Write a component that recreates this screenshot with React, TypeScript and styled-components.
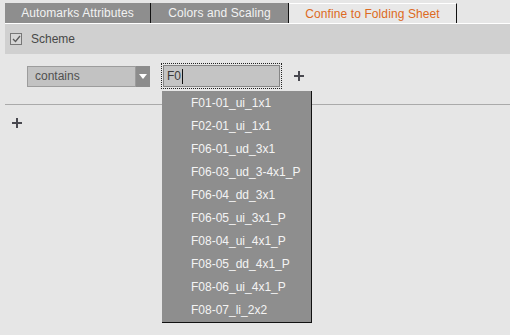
import styled, { createGlobalStyle } from "styled-components";

const GlobalStyle = createGlobalStyle`
  html, body {
    margin: 0;
    padding: 0;
    background: #e6e6e6;
  }
  body {
    font-family: "Liberation Sans", Arial, sans-serif;
    font-size: 12px;
  }
`;

const Page = styled.div`
  position: relative;
  width: 510px;
  height: 335px;
  padding: 3px 0 0 5px;
  box-sizing: border-box;
  overflow: hidden;
`;

const TabStrip = styled.div`
  display: flex;
  height: 20px;
  border-bottom: 1px solid #ffffff;
`;

const Tab = styled.div<{ $active?: boolean; $w: number }>`
  display: flex;
  align-items: center;
  justify-content: center;
  width: ${({ $w }) => $w}px;
  height: 20px;
  box-sizing: border-box;
  background: ${({ $active }) => ($active ? "#e8e8e8" : "#8e8e8e")};
  color: ${({ $active }) => ($active ? "#dd6a22" : "#f2f2f2")};
  border-right: 1px solid #111111;
  border-top: ${({ $active }) => ($active ? "1px solid #ffffff" : "none")};
  letter-spacing: 0.1px;
  white-space: nowrap;
`;

const SchemeBar = styled.div`
  display: flex;
  align-items: center;
  height: 30px;
  padding-left: 5px;
  background: #d0d0d0;
  color: #484848;
`;

const CheckBox = styled.span`
  display: inline-flex;
  align-items: center;
  justify-content: center;
  width: 12px;
  height: 12px;
  box-sizing: border-box;
  border: 1px solid #777777;
  background: #d6d6d6;
  margin-right: 9px;
`;

const FilterRow = styled.div`
  display: flex;
  align-items: center;
  padding: 9px 0 0 22px;
  height: 26px;
`;

const Combo = styled.div`
  display: flex;
  width: 123px;
  height: 21px;
`;

const ComboValue = styled.div`
  flex: 1;
  display: flex;
  align-items: center;
  padding-left: 7px;
  border: 1px solid #9c9c9c;
  background: #c2c2c2;
  color: #505050;
`;

const ComboArrow = styled.div`
  display: flex;
  align-items: center;
  justify-content: center;
  width: 14px;
  background: #8c8c8c;
`;

const FieldWrap = styled.div`
  position: relative;
  margin-left: 11px;
  width: 121px;
  height: 26px;
  box-sizing: border-box;
  border: 1px dotted #222222;
  padding: 1px;
`;

const FieldBox = styled.div`
  display: flex;
  align-items: center;
  height: 100%;
  box-sizing: border-box;
  border: 1px solid #858585;
  background: #c4c4c4;
  padding-left: 3px;
  color: #3a3a3a;
`;

const Caret = styled.span`
  display: inline-block;
  width: 1px;
  height: 15px;
  margin-left: 1px;
  background: #111111;
`;

const AddButton = styled.span<{ $ml: number }>`
  display: inline-flex;
  margin-left: ${({ $ml }) => $ml}px;
`;

const Divider = styled.div`
  margin-top: 15px;
  height: 1px;
  background: #aaaaaa;
`;

const BottomAdd = styled.div`
  padding: 13px 0 0 7px;
  display: flex;
`;

const Suggestions = styled.ul`
  position: absolute;
  top: calc(100% + 3px);
  left: 0;
  width: 149px;
  margin: 0;
  padding: 1px 0 0;
  list-style: none;
  background: #8e8e8e;
  border-right: 1px solid #111111;
  border-bottom: 1px solid #111111;
  z-index: 5;
`;

const Suggestion = styled.li`
  height: 23px;
  line-height: 23px;
  padding-left: 29px;
  color: #f4f4f4;
  white-space: nowrap;
`;

const schemes = [
  "F01-01_ui_1x1",
  "F02-01_ui_1x1",
  "F06-01_ud_3x1",
  "F06-03_ud_3-4x1_P",
  "F06-04_dd_3x1",
  "F06-05_ui_3x1_P",
  "F08-04_ui_4x1_P",
  "F08-05_dd_4x1_P",
  "F08-06_ui_4x1_P",
  "F08-07_li_2x2",
];

function PlusIcon() {
  return (
    <svg width="10" height="10" viewBox="0 0 10 10">
      <rect x="0" y="4" width="10" height="2" fill="#48484f" />
      <rect x="4" y="0" width="2" height="10" fill="#48484f" />
    </svg>
  );
}

export default function App() {
  return (
    <>
      <GlobalStyle />
      <Page>
        <TabStrip>
          <Tab $w={146}>Automarks Attributes</Tab>
          <Tab $w={138}>Colors and Scaling</Tab>
          <Tab $w={168} $active>
            Confine to Folding Sheet
          </Tab>
        </TabStrip>
        <SchemeBar>
          <CheckBox>
            <svg width="9" height="8" viewBox="0 0 9 8">
              <path d="M1 4 L3.5 6.5 L8 1" fill="none" stroke="#5a5a5a" strokeWidth="1.3" />
            </svg>
          </CheckBox>
          Scheme
        </SchemeBar>
        <FilterRow>
          <Combo>
            <ComboValue>contains</ComboValue>
            <ComboArrow>
              <svg width="8" height="5" viewBox="0 0 8 5">
                <path d="M0 0 H8 L4 5 Z" fill="#ffffff" />
              </svg>
            </ComboArrow>
          </Combo>
          <FieldWrap>
            <FieldBox>
              F0
              <Caret />
            </FieldBox>
            <Suggestions>
              {schemes.map((s) => (
                <Suggestion key={s}>{s}</Suggestion>
              ))}
            </Suggestions>
          </FieldWrap>
          <AddButton $ml={12}>
            <PlusIcon />
          </AddButton>
        </FilterRow>
        <Divider />
        <BottomAdd>
          <PlusIcon />
        </BottomAdd>
      </Page>
    </>
  );
}
